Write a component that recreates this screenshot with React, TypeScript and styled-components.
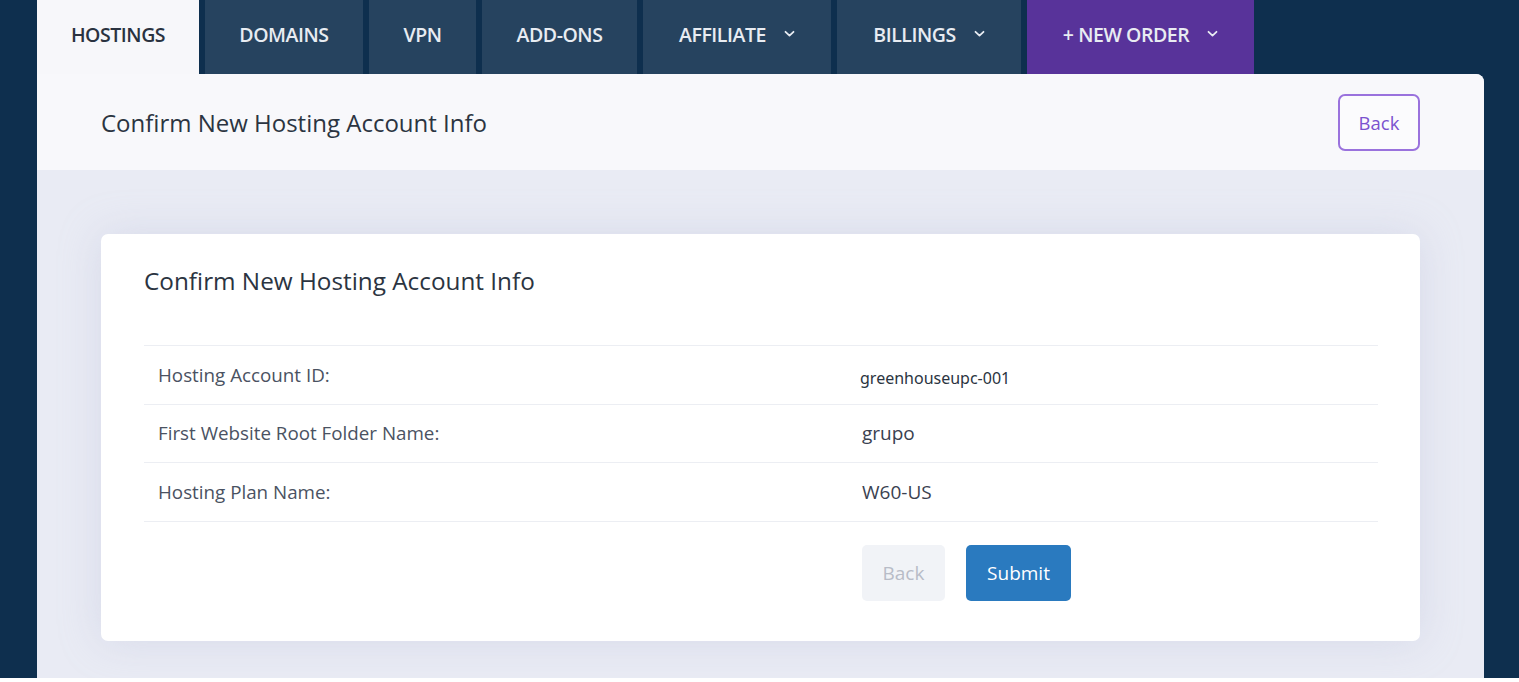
import React from 'react'
import styled, { createGlobalStyle } from 'styled-components';

const GlobalStyle = createGlobalStyle`
  html, body {
    margin: 0;
    padding: 0;
    background: #ffffff;
    font-family: "Open Sans", "Noto Sans", sans-serif;
    -webkit-font-smoothing: antialiased;
  }
`;

const Page = styled.div`
  width: 1519px;
  height: 678px;
  overflow: hidden;
  padding-left: 37px;
  box-sizing: border-box;
  background: #0e2f4e;
`;

const TabBar = styled.nav`
  display: flex;
  height: 74px;
  gap: 6px;
`;

const Tab = styled.div<{ active?: boolean; accent?: boolean; w: number }>`
  width: ${p => p.w}px;
  display: flex;
  align-items: center;
  justify-content: center;
  gap: 18px;
  font-size: 19.5px;
  font-weight: 600;
  letter-spacing: -0.45px;
  color: ${p => p.active ? '#2a3240' : '#e8ecf2'};
  background: ${p => p.active ? '#f7f7fa' : p.accent ? '#58339a' : '#26435f'};
  box-sizing: border-box;
  padding-bottom: 6px;
`;

const Chevron = () => (
  <svg width="11" height="8" viewBox="0 0 11 8" fill="none">
    <path d="M1.5 1.8 L5.5 5.6 L9.5 1.8" stroke="#e8ecf2" strokeWidth="1.8" strokeLinecap="round" strokeLinejoin="round" />
  </svg>
);

const Panel = styled.section`
  width: 1447px;
  border-radius: 0 8px 0 0;
  overflow: hidden;
  background: #e9ebf4;
`;

const PanelHeader = styled.header`
  height: 96px;
  background: #f8f8fb;
  display: flex;
  align-items: center;
  justify-content: space-between;
  padding: 0 64px 0 64px;
  box-sizing: border-box;
`;

const HeaderTitle = styled.h1`
  margin: 0;
  font-size: 24px;
  font-weight: 400;
  color: #2b3441;
`;

const OutlineButton = styled.button`
  width: 82px;
  height: 57px;
  margin-top: 1px;
  border: 2px solid #9a72dd;
  border-radius: 7px;
  background: #fbfbfd;
  color: #7a52cf;
  font-family: "Open Sans", sans-serif;
  font-size: 18.5px;
`;

const PanelBody = styled.div`
  padding: 64px 64px 40px 64px;
`;

const Card = styled.div`
  background: #ffffff;
  border-radius: 7px;
  box-shadow: 0 0 40px rgba(180, 185, 215, 0.35);
  padding: 30px 42px 40px 43px;
  height: 407px;
  box-sizing: border-box;
`;

const CardTitle = styled.h2`
  margin: 0 0 48px 0;
  font-size: 24.3px;
  font-weight: 400;
  color: #2b3441;
`;

const InfoTable = styled.div`
  border-top: 1.5px solid #eceef3;
`;

const Row = styled.div`
  display: grid;
  grid-template-columns: 704px 1fr;
  height: 57.5px;
  align-items: center;
  border-bottom: 1.5px solid #eceef3;
  padding-left: 14px;
`;

const Label = styled.div`
  font-size: 18.8px;
  color: #4a5262;
`;

const Value = styled.div<{ small?: boolean }>`
  font-size: ${p => p.small ? '16px' : '19px'};
  color: ${p => p.small ? '#2b3441' : '#3a4150'};
  font-weight: ${p => p.small ? 400 : 500};
  font-family: ${p => p.small ? '"Noto Sans", sans-serif' : '"Open Sans", sans-serif'};
  margin-left: ${p => p.small ? '-2px' : '0'};
  margin-top: ${p => p.small ? '6px' : '0'};
`;

const Actions = styled.div`
  display: flex;
  gap: 21px;
  padding-left: 718px;
  margin-top: 23px;
`;

const ActionButton = styled.button<{ primary?: boolean }>`
  height: 56px;
  padding: 0 20px;
  min-width: ${p => p.primary ? '105px' : '83px'};
  border: none;
  border-radius: 5px;
  font-family: "Open Sans", sans-serif;
  font-size: 19px;
  color: ${p => p.primary ? '#ffffff' : '#b8bcc7'};
  background: ${p => p.primary ? '#2a7abf' : '#f1f3f7'};
`;

const tabs = [
  { label: 'HOSTINGS', w: 162, active: true },
  { label: 'DOMAINS', w: 158 },
  { label: 'VPN', w: 107 },
  { label: 'ADD-ONS', w: 155 },
  { label: 'AFFILIATE', w: 188, menu: true },
  { label: 'BILLINGS', w: 184, menu: true },
  { label: '+ NEW ORDER', w: 227, menu: true, accent: true },
];

const rows = [
  { label: 'Hosting Account ID:', value: 'greenhouseupc-001', small: true },
  { label: 'First Website Root Folder Name:', value: 'grupo' },
  { label: 'Hosting Plan Name:', value: 'W60-US' },
];

export default function App() {
  return (
    <Page>
      <GlobalStyle />
      <TabBar>
        {tabs.map(t => (
          <Tab key={t.label} w={t.w} active={t.active} accent={t.accent}>
            {t.label}
            {t.menu && <Chevron />}
          </Tab>
        ))}
      </TabBar>
      <Panel>
        <PanelHeader>
          <HeaderTitle>Confirm New Hosting Account Info</HeaderTitle>
          <OutlineButton>Back</OutlineButton>
        </PanelHeader>
        <PanelBody>
          <Card>
            <CardTitle>Confirm New Hosting Account Info</CardTitle>
            <InfoTable>
              {rows.map(r => (
                <Row key={r.label}>
                  <Label>{r.label}</Label>
                  <Value small={r.small}>{r.value}</Value>
                </Row>
              ))}
            </InfoTable>
            <Actions>
              <ActionButton>Back</ActionButton>
              <ActionButton primary>Submit</ActionButton>
            </Actions>
          </Card>
        </PanelBody>
      </Panel>
    </Page>
  );
}
